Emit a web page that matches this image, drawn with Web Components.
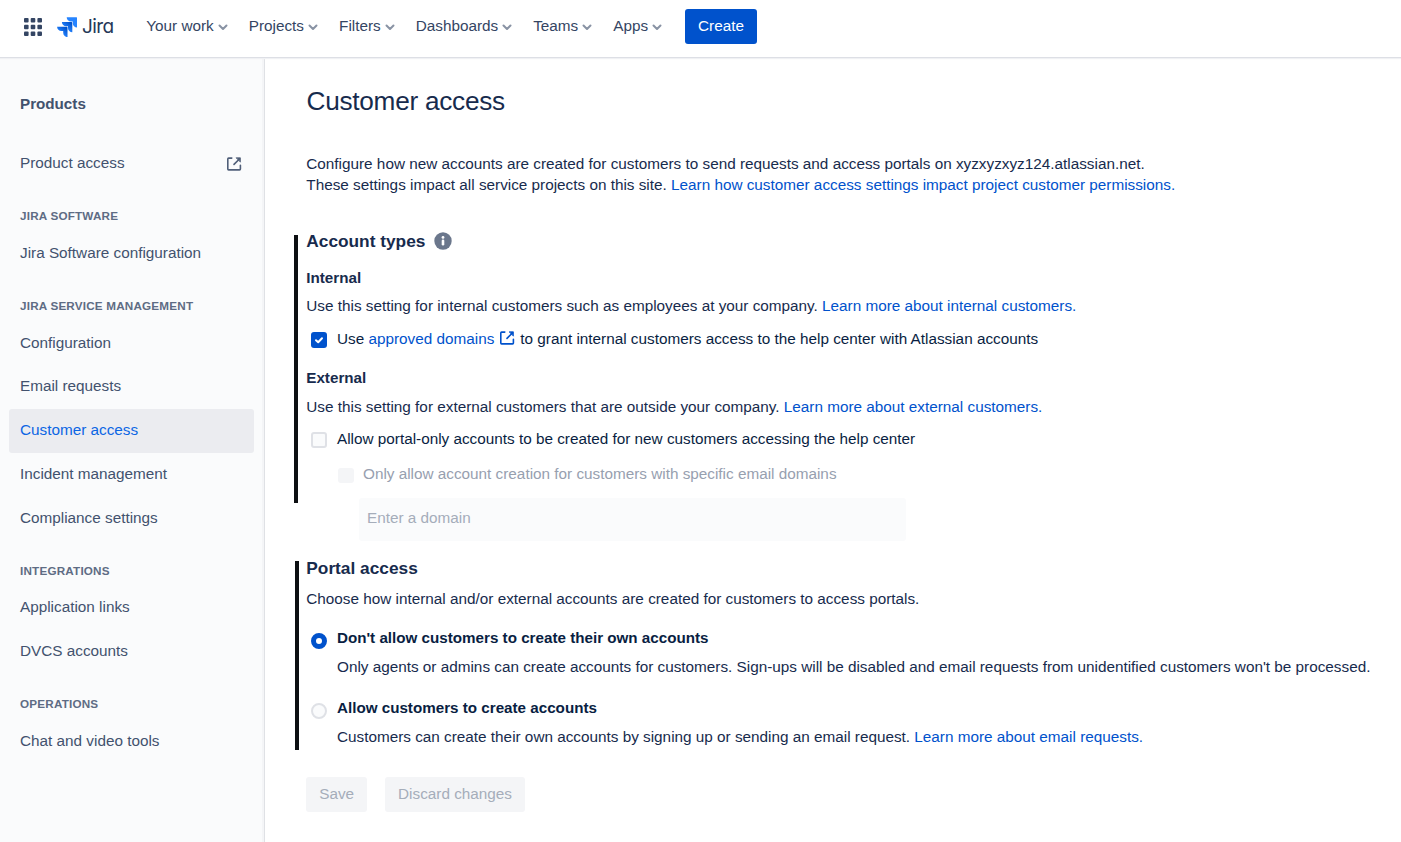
<!DOCTYPE html>
<html lang="en">
<head>
<meta charset="utf-8">
<title>Customer access - Jira</title>
<style>
html,body{margin:0;height:100%}
body{font-family:"Liberation Sans",Arial,sans-serif;font-size:15.3px;color:#172b4d;background:#fff;overflow:hidden}
</style>
</head>
<body>
<jira-app></jira-app>
<script>
function define(name, html, setup){
  const t=document.createElement('template');
  t.innerHTML=html;
  customElements.define(name, class extends HTMLElement{
    constructor(){
      super();
      this.attachShadow({mode:'open'}).appendChild(t.content.cloneNode(true));
      if(setup) setup(this);
    }
  });
}

define('external-icon',`<style>:host{display:inline-block;width:16px;height:16px}svg{display:block}</style>
<svg width="16" height="16" viewBox="0 0 16 16" fill="none" stroke="currentColor" stroke-width="1.6" stroke-linecap="round" stroke-linejoin="round"><path d="M5.800 2.100H2.600a.8.800 0 0 0-.8.800v10.200c0 .5.300.8.800.8h11c.5 0 .8-.3.800-.8V9.300"/><path d="M8 8.400l5.400-5.400"/><path d="M10.400 1.800h4v4z" fill="currentColor" stroke-width=".8"/></svg>`);

define('nav-menu',`<style>:host{display:flex;align-items:center;gap:4px;line-height:22px;color:#344563;white-space:nowrap}svg{display:block;margin-top:3px}</style>
<slot></slot><svg width="10" height="7" viewBox="0 0 10 7" fill="none" stroke="#8993a4" stroke-width="2" stroke-linecap="round" stroke-linejoin="round"><path d="M1.500 1.500L5 5l3.500-3.500"/></svg>`);

define('jira-button',`<style>:host{display:block;box-sizing:border-box;height:35px;line-height:34px;padding:0 13px;border-radius:3px;white-space:nowrap;background:#f4f5f7;color:#a5adba;text-align:center}
:host([primary]){background:#0052cc;color:#fff}</style><slot></slot>`);

define('jira-header',`<style>
:host{display:flex;align-items:center;box-sizing:border-box;height:57px;padding:0 0 4px 24px;background:#fff;position:relative;z-index:1;box-shadow:0 1px 0 #dddfe5,0 2px 1px #f0f1f4}
.logo{display:flex;align-items:center;margin-left:15px;width:89.300px}
.word{font-family:Inter,sans-serif;font-size:19px;font-feature-settings:"cv11";color:#253858;margin-left:5px;letter-spacing:-.6px;line-height:24px}
nav{display:flex;gap:21px;margin-top:-2px}
jira-button{margin-left:22.900px}
svg{display:block}
</style>
<svg width="18" height="18" viewBox="0 0 18 18" fill="#344563"><g id="g"><rect width="4.600" height="4.600" rx="1"/><rect x="6.700" width="4.600" height="4.600" rx="1"/><rect x="13.400" width="4.600" height="4.600" rx="1"/></g><use href="#g" y="6.700"/><use href="#g" y="13.400"/></svg>
<div class="logo"><svg width="20" height="20" viewBox="0 0 20 20"><defs><linearGradient id="a" x1="1" y1="0" x2=".4" y2=".7"><stop offset=".18" stop-color="#0052cc"/><stop offset="1" stop-color="#2684ff"/></linearGradient></defs>
<path fill="#2684ff" d="M19.300.2H9.700a4.300 4.300 0 0 0 4.300 4.300h1.800v1.700a4.300 4.300 0 0 0 4.300 4.300V1a.8.800 0 0 0-.8-.8z"/><path fill="url(#a)" d="M14.500 5H4.900a4.300 4.300 0 0 0 4.300 4.300H11V11a4.300 4.300 0 0 0 4.300 4.300V5.800a.8.800 0 0 0-.8-.8z"/><path fill="url(#a)" d="M9.700 9.800H.1a4.300 4.300 0 0 0 4.300 4.300h1.800v1.700a4.300 4.300 0 0 0 4.300 4.300v-9.500a.8.800 0 0 0-.8-.8z"/></svg><span class="word">Jira</span></div>
<nav><nav-menu>Your work</nav-menu><nav-menu>Projects</nav-menu><nav-menu>Filters</nav-menu><nav-menu>Dashboards</nav-menu><nav-menu>Teams</nav-menu><nav-menu>Apps</nav-menu></nav>
<jira-button primary>Create</jira-button>`);

define('side-item',`<style>:host{display:flex;box-sizing:border-box;align-items:center;justify-content:space-between;height:43.800px;padding:0 12px 2px 11px;border-radius:3px;color:#42526e}
:host([selected]){background:#ebecf0;color:#0c66e4}</style><slot></slot><slot name="icon"></slot>`);

define('side-group',`<style>:host{display:block;margin-top:22px}
h3{margin:0 0 8px;padding-left:11px;font-size:11.700px;letter-spacing:.19px;line-height:16px;font-weight:700;color:#5e6c84}</style><h3></h3><slot></slot>`,
el=>{el.shadowRoot.querySelector('h3').textContent=el.getAttribute('label')});

define('side-nav',`<style>:host{display:block;box-sizing:border-box;width:265px;padding:36px 10px 0 9px;background:#fafbfc;border-right:1px solid #dfe1e5;box-shadow:inset -2px 0 0 #f4f5f7}
h2{margin:0 0 27px;padding-left:11px;font-size:15.200px;line-height:22px;color:#42526e}
side-item external-icon{margin-top:3px;color:#505f79}
.low{padding-bottom:1px}</style>
<h2>Products</h2>
<side-item>Product access<external-icon slot="icon"></external-icon></side-item>
<side-group label="JIRA SOFTWARE"><side-item>Jira Software configuration</side-item></side-group>
<side-group label="JIRA SERVICE MANAGEMENT"><side-item class="low">Configuration</side-item><side-item>Email requests</side-item><side-item selected>Customer access</side-item><side-item>Incident management</side-item><side-item>Compliance settings</side-item></side-group>
<side-group label="INTEGRATIONS"><side-item>Application links</side-item><side-item>DVCS accounts</side-item></side-group>
<side-group label="OPERATIONS"><side-item>Chat and video tools</side-item></side-group>`);

define('text-link',`<style>:host{color:#0052cc}</style><slot></slot>`);

define('choice-row',`<style>:host{display:flex;align-items:flex-start;height:22px;line-height:22px;padding-left:5px;color:#091e42;white-space:nowrap}
i{box-sizing:border-box;width:16px;height:16px;margin:4px 9.700px 0 0;border:2px solid #dfe1e6;border-radius:3px;background:#fafbfc;flex:none}
:host([type=radio]) i{border-radius:50%;margin-top:6px}
:host([type=radio]){font-weight:700;font-size:15.200px}
:host([checked]) i{border:0;background:#0052cc}
:host([type=radio][checked]) i{border:5.500px solid #0052cc;background:#fff}
:host([disabled]){color:#97a0af;padding-left:32px}
:host([disabled]) i{border:0;background:#f4f5f7;height:15px;margin:5px 8.700px 0 0}
svg{display:none}:host([type=check][checked]) svg{display:block}</style>
<i><svg width="16" height="16" viewBox="0 0 16 16" fill="none" stroke="#fff" stroke-width="2" stroke-linecap="round" stroke-linejoin="round"><path d="M5 8.200l2.200 2L11 6.200"/></svg></i><span><slot></slot></span>`);

define('setting-section',`<style>:host{display:flow-root;box-sizing:border-box;border-left:4px solid #0d0f12;padding-left:8.300px}</style><slot></slot>`);

define('domain-input',`<style>:host{display:block;box-sizing:border-box;width:547px;height:43px;padding-left:8px;line-height:40px;background:#fafbfc;border-radius:3px;color:#a5adba}</style><slot></slot>`);

define('customer-access',`<style>
:host{display:block;flex:1;padding:29px 0 0 29px;white-space:nowrap}
h1{margin:0 0 37px 12.500px;font-size:26.200px;line-height:30px;font-weight:400;letter-spacing:-.01em}
.intro{margin:0 0 40px 12.300px;line-height:21px}
h2,h3,p{margin:0;line-height:22px}
h2{font-size:17.300px;display:flex;align-items:center}
h3{font-size:15.200px}
h2 svg{margin-left:8.500px}
.types{height:268px}
.portal{height:189px;margin:58px 0 27px 1px;padding-left:7.300px}
.desc{padding-left:30.700px}
.actions{display:flex;gap:18px;margin-left:12.200px}
external-icon{vertical-align:-2px;margin:0 5px}
</style>
<h1>Customer access</h1>
<div class="intro">Configure how new accounts are created for customers to send requests and access portals on xyzxyzxyz124.atlassian.net.<br>These settings impact all service projects on this site. <text-link>Learn how customer access settings impact project customer permissions.</text-link></div>
<setting-section class="types">
<h2 style="margin-top:-5px">Account types<svg width="18" height="18" viewBox="0 0 18 18"><circle cx="9" cy="9" r="8.700" fill="#6b778c"/><circle cx="9" cy="5.400" r="1.400" fill="#fff"/><path d="M9 8.800v3.500" stroke="#fff" stroke-width="2.600" stroke-linecap="round"/></svg></h2>
<h3 style="margin-top:15px">Internal</h3>
<p style="margin-top:6px">Use this setting for internal customers such as employees at your company. <text-link>Learn more about internal customers.</text-link></p>
<choice-row type="check" checked style="margin-top:11px">Use <text-link>approved domains<external-icon></external-icon></text-link>to grant internal customers access to the help center with Atlassian accounts</choice-row>
<h3 style="margin-top:17px">External</h3>
<p style="margin-top:7px">Use this setting for external customers that are outside your company. <text-link>Learn more about external customers.</text-link></p>
<choice-row type="check" style="margin-top:10px">Allow portal-only accounts to be created for new customers accessing the help center</choice-row>
<choice-row type="check" disabled style="margin-top:13px">Only allow account creation for customers with specific email domains</choice-row>
<domain-input style="margin:13px 0 0 52.700px">Enter a domain</domain-input>
</setting-section>
<setting-section class="portal">
<h2 style="margin-top:-4px">Portal access</h2>
<p style="margin-top:9px">Choose how internal and/or external accounts are created for customers to access portals.</p>
<choice-row type="radio" checked style="margin-top:17px">Don't allow customers to create their own accounts</choice-row>
<p class="desc" style="margin-top:7px">Only agents or admins can create accounts for customers. Sign-ups will be disabled and email requests from unidentified customers won't be processed.</p>
<choice-row type="radio" style="margin-top:19px">Allow customers to create accounts</choice-row>
<p class="desc" style="margin-top:7px">Customers can create their own accounts by signing up or sending an email request. <text-link>Learn more about email requests.</text-link></p>
</setting-section>
<div class="actions"><jira-button>Save</jira-button><jira-button>Discard changes</jira-button></div>`);

define('jira-app',`<style>:host{display:flex;flex-direction:column;height:100vh}div{display:flex;flex:1;min-height:0}side-nav{flex:none}</style>
<jira-header></jira-header><div><side-nav></side-nav><customer-access></customer-access></div>`);
</script>
</body>
</html>
